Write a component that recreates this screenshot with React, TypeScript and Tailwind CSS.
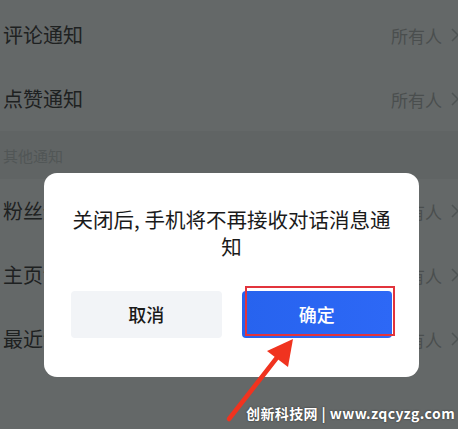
import React from "react";

const font = { fontFamily: '"Noto Sans CJK SC", "Noto Sans", sans-serif' };

function Row({ title }: { title: string }) {
  return (
    <div className="flex h-[64px] items-center justify-between pl-[3px] pr-[2px]">
      <span className="text-[20px] leading-none text-[#1e2121]">{title}</span>
      <div className="flex items-center gap-[8px]">
        <span className="text-[17px] leading-none text-[#4a4e4e]">所有人</span>
        <svg width="10" height="16" viewBox="0 0 10 16" className="text-[#4f5454]">
          <path d="M2 2 L8 8 L2 14" fill="none" stroke="currentColor" strokeWidth="1.5" />
        </svg>
      </div>
    </div>
  );
}

export default function App() {
  return (
    <div className="relative h-[429px] w-[458px] overflow-hidden bg-[#646868]" style={font}>
      <div className="w-[462px] pt-[3px]">
        <Row title="评论通知" />
        <Row title="点赞通知" />
        <div className="flex h-[48px] items-center bg-[#606464] pl-[3px]">
          <span className="text-[15px] leading-none text-[#515656]">其他通知</span>
        </div>
        <Row title="粉丝通知" />
        <Row title="主页访客" />
        <Row title="最近访问" />
      </div>

      {/* dialog */}
      <div className="absolute left-[44px] top-[173px] flex h-[204px] w-[375px] flex-col items-center rounded-[13px] bg-white px-[27px] pt-[33px]">
        <p className="text-center text-[20.5px] leading-[27px] text-[#1a1a1a]">
          关闭后, 手机将不再接收对话消息通知
        </p>
        <div className="mt-[31px] flex w-full gap-[20px]">
          <div className="flex h-[47px] flex-1 items-center justify-center rounded-[4px] bg-[#f2f4f7] text-[18px] font-medium text-[#1a1a1a]">
            取消
          </div>
          <div className="flex h-[47px] flex-1 items-center justify-center rounded-[4px] bg-gradient-to-r from-[#2763ee] to-[#2d68f6] text-[18px] font-medium text-white">
            确定
          </div>
        </div>
      </div>

      {/* red highlight */}
      <div className="absolute left-[245px] top-[286px] h-[50px] w-[150px] border-[2px] border-[#e2343c]" />

      {/* arrow */}
      <svg className="absolute left-0 top-0" width="458" height="429" viewBox="0 0 458 429">
        <path d="M229 419 L279 355" stroke="#f0331f" strokeWidth="4.5" strokeLinecap="round" />
        <polygon points="293,339 267,351 288,367" fill="#f0331f" />
      </svg>

      {/* watermark */}
      <div
        className="absolute left-[246px] top-[403px] whitespace-nowrap text-[14px] font-bold leading-[20px] tracking-[0.4px] text-white"
        style={{ textShadow: "0 0 2px rgba(0,0,0,0.6)" }}
      >
        创新科技网 | www.zqcyzg.com
      </div>
    </div>
  );
}
